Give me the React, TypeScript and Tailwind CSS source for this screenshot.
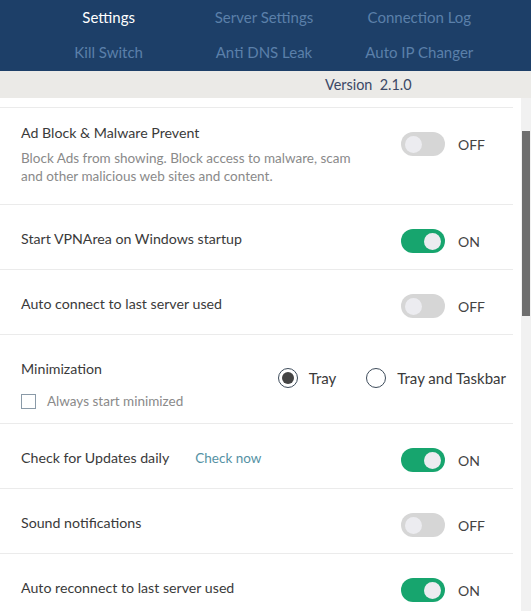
import { useState } from "react";

const TABS = [
  ["Settings", "Server Settings", "Connection Log"],
  ["Kill Switch", "Anti DNS Leak", "Auto IP Changer"],
];

function Toggle({ on }: { on: boolean }) {
  return (
    <div className="flex w-[112px] items-center">
      <div
        className={`flex h-[24px] w-[44px] items-center rounded-full px-[4px] ${
          on ? "justify-end bg-[#17a56e]" : "justify-start bg-[#d6d6d6]"
        }`}
      >
        <div className="h-[17px] w-[17px] rounded-full bg-[#ececf0]" />
      </div>
      <span className="ml-[13px] text-[14px] text-[#444]">{on ? "ON" : "OFF"}</span>
    </div>
  );
}

function Row({ title, on, extra }: { title: string; on: boolean; extra?: React.ReactNode }) {
  return (
    <div className="flex h-[65px] items-center border-b border-[#ebebeb] pl-[21px] pt-[4px]">
      <div className="flex flex-1 items-center">
        <span className="text-[14.2px] text-[#3a3a3a]">{title}</span>
        {extra}
      </div>
      <div className="mt-[4px]">
        <Toggle on={on} />
      </div>
    </div>
  );
}

export default function App() {
  const [tray, setTray] = useState(true);

  return (
    <div className="h-[611px] w-[531px] overflow-hidden bg-white font-['Lato',sans-serif]">
      {/* Tabs */}
      <div className="grid h-[71px] grid-cols-3 grid-rows-2 bg-[#1d3f68] pb-[2px] pl-[31px] pr-[34px] text-[15px]">
        {TABS.flat().map((t, i) => (
          <div
            key={t}
            className={`flex items-center justify-center ${i === 0 ? "text-white" : "text-[#5b80aa]"}`}
          >
            {t}
          </div>
        ))}
      </div>

      {/* Version */}
      <div className="flex h-[27px] items-center bg-[#ebeae7] pl-[325px] text-[14.4px] text-[#3b4866]">
        Version&nbsp;&nbsp;2.1.0
      </div>

      <div className="flex">
        {/* List */}
        <div className="w-[513px]">
          <div className="h-[10px] border-b border-[#ebebeb]" />

          <div className="flex h-[97px] border-b border-[#ebebeb] pl-[21px]">
            <div className="flex-1 pt-[15px]">
              <div className="text-[14.2px] leading-[20px] text-[#3a3a3a]">Ad Block &amp; Malware Prevent</div>
              <div className="mt-[6px] text-[13.5px] leading-[18px] text-[#8a8a8a]">
                Block Ads from showing. Block access to malware, scam
                <br />
                and other malicious web sites and content.
              </div>
            </div>
            <div className="pt-[24px]">
              <Toggle on={false} />
            </div>
          </div>

          <Row title="Start VPNArea on Windows startup" on />
          <Row title="Auto connect to last server used" on={false} />

          <div className="flex h-[89px] border-b border-[#ebebeb] pl-[21px]">
            <div className="flex-1 pt-[24px]">
              <div className="text-[14.2px] leading-[20px] text-[#3a3a3a]">Minimization</div>
              <label className="mt-[12px] flex items-center">
                <span className="h-[15px] w-[15px] border border-[#8a9aa8] bg-white" />
                <span className="ml-[11px] text-[13.5px] text-[#8a8a8a]">Always start minimized</span>
              </label>
            </div>
            <div className="flex items-start pr-[7px] pt-[32px]">
              <button className="flex items-center" onClick={() => setTray(true)}>
                <span className="flex h-[20px] w-[20px] items-center justify-center rounded-full border border-[#3d4b5a]">
                  {tray && <span className="h-[12px] w-[12px] rounded-full bg-[#444]" />}
                </span>
                <span className="ml-[11px] text-[15px] text-[#3a3a3a]">Tray</span>
              </button>
              <button className="ml-[30px] flex items-center" onClick={() => setTray(false)}>
                <span className="flex h-[20px] w-[20px] items-center justify-center rounded-full border border-[#3d4b5a]">
                  {!tray && <span className="h-[12px] w-[12px] rounded-full bg-[#444]" />}
                </span>
                <span className="ml-[11px] text-[15px] text-[#3a3a3a]">Tray and Taskbar</span>
              </button>
            </div>
          </div>

          <Row
            title="Check for Updates daily"
            on
            extra={<span className="ml-[26px] text-[13.5px] text-[#5592a4]">Check now</span>}
          />
          <Row title="Sound notifications" on={false} />
          <Row title="Auto reconnect to last server used" on />
        </div>

        {/* Scrollbar */}
        <div className="ml-[8px] h-[513px] w-[10px] bg-[#f1f1f1] pl-[1px] pt-[33px]">
          <div className="h-[185px] w-[8px] bg-[#6e6e6e]" />
        </div>
      </div>
    </div>
  );
}
